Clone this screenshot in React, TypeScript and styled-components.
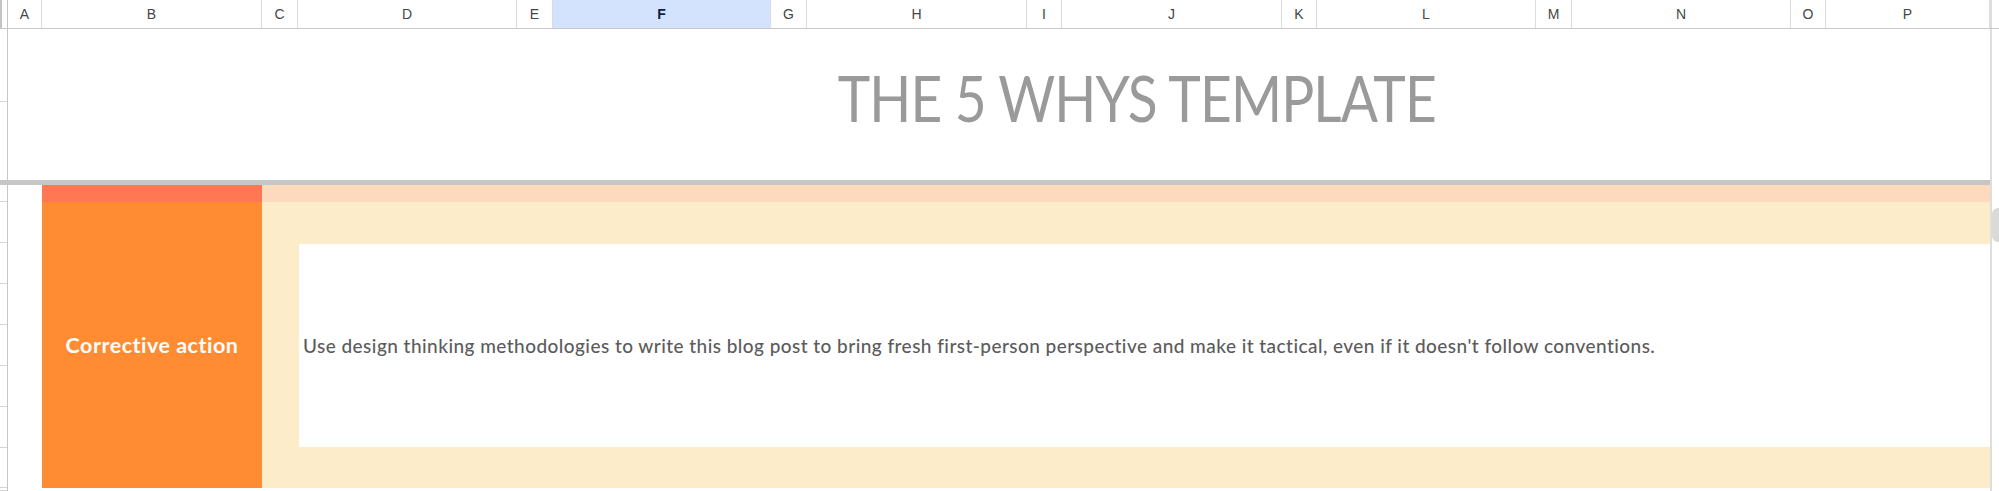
import React from 'react';
import styled, { createGlobalStyle } from 'styled-components';

const GlobalStyle = createGlobalStyle`
    html, body {
        margin:0;
        padding:0;
        background:#ffffff;
        overflow:hidden;
    }
`;

const Sheet = styled.div`
    width:1999px;
    height:491px;
    display:flex;
    flex-direction:column;
    background:#ffffff;
    font-family:"Liberation Sans", Arial, sans-serif;
`;

const HeaderRow = styled.div`
    display:flex;
    height:29px;
    flex:none;
    box-sizing:border-box;
    border-bottom:1px solid #c7c7c7;
`;

const Corner = styled.div`
    width:8px;
    flex:none;
    box-sizing:border-box;
    border-left:2px solid #c4c4c4;
    border-right:1px solid #c4c7c5;
`;

const ColHead = styled.div<{ $w: number; $active?: boolean }>`
    width:${p => p.$w}px;
    flex:none;
    box-sizing:border-box;
    display:flex;
    align-items:center;
    justify-content:center;
    border-right:1px solid #dadce0;
    font-size:14px;
    font-weight:${p => (p.$active ? 700 : 400)};
    color:${p => (p.$active ? '#0b1f4a' : '#444746')};
    background:${p => (p.$active ? '#d3e3fd' : '#ffffff')};
`;

const Gutter = styled.div`
    width:9px;
    flex:none;
    box-sizing:border-box;
    border-left:2px solid #dedede;
    background:#ffffff;
`;

const Body = styled.div`
    flex:1;
    display:flex;
    min-height:0;
`;

const RowHeads = styled.div`
    width:8px;
    flex:none;
    display:flex;
    flex-direction:column;
    box-sizing:border-box;
    border-right:1px solid #c4c7c5;
`;

const RowHead = styled.div<{ $h: number; $freeze?: boolean }>`
    height:${p => p.$h}px;
    flex:none;
    box-sizing:border-box;
    border-bottom:${p => (p.$freeze ? '5px solid #c6c6c6' : '1px solid #d5d5d5')};
`;

const Cells = styled.div`
    width:1982px;
    flex:none;
    display:flex;
    flex-direction:column;
`;

const TitleRow = styled.div`
    height:151px;
    flex:none;
    display:flex;
    align-items:center;
    justify-content:center;
    padding:0 14px 14px 290px;
    box-sizing:border-box;
`;

/* Futura is not installed: Lato, narrowed to the same run length */
const Title = styled.h1`
    margin:0;
    font-family:"Lato", "Liberation Sans", sans-serif;
    font-weight:400;
    font-size:64px;
    line-height:1;
    letter-spacing:-1px;
    color:#9a9a9a;
    white-space:nowrap;
    transform:scaleX(0.86);
`;

const Freeze = styled.div`
    height:5px;
    flex:none;
    background:#c6c6c6;
`;

const ActionRow = styled.div`
    height:303px;
    flex:none;
    display:flex;
`;

const BlankCell = styled.div`
    width:34px;
    flex:none;
    background:#ffffff;
`;

const LabelCol = styled.div`
    width:220px;
    flex:none;
    display:flex;
    flex-direction:column;
`;

const Band = styled.div<{ $color: string }>`
    height:17px;
    flex:none;
    background:${p => p.$color};
`;

const Label = styled.div`
    flex:1;
    display:flex;
    align-items:center;
    justify-content:center;
    background:#ff8b33;
    color:#ffffff;
    font-family:"Lato", "Liberation Sans", sans-serif;
    font-weight:700;
    font-size:21.5px;
    letter-spacing:0.5px;
`;

const ContentCol = styled.div`
    flex:1;
    display:flex;
    flex-direction:column;
`;

const Cream = styled.div`
    flex:1;
    display:flex;
    padding:42px 0 41px 37px;
    background:#fdecca;
`;

const TextBox = styled.div`
    flex:1;
    display:flex;
    align-items:center;
    padding-left:4px;
    background:#ffffff;
    font-family:"Lato", "Liberation Sans", sans-serif;
    font-weight:500;
    font-size:19px;
    letter-spacing:0.45px;
    color:#5c5c5c;
    white-space:nowrap;
`;

const ScrollTrack = styled.div`
    width:9px;
    flex:none;
    box-sizing:border-box;
    border-left:2px solid #dedede;
    padding-top:179px;
    background:#ffffff;
`;

const ScrollThumb = styled.div`
    height:34px;
    background:#dadada;
    border-radius:6px 0 0 6px;
`;

const columns: { name: string; w: number }[] = [
    { name: 'A', w: 34 }, { name: 'B', w: 220 }, { name: 'C', w: 36 }, { name: 'D', w: 219 },
    { name: 'E', w: 36 }, { name: 'F', w: 218 }, { name: 'G', w: 36 }, { name: 'H', w: 220 },
    { name: 'I', w: 35 }, { name: 'J', w: 220 }, { name: 'K', w: 35 }, { name: 'L', w: 219 },
    { name: 'M', w: 36 }, { name: 'N', w: 219 }, { name: 'O', w: 35 }, { name: 'P', w: 164 },
];

const rowHeights = [73, 78, 17, 41, 41, 41, 41, 41, 41, 40, 3];

const App = () => {
    return (
        <Sheet>
            <GlobalStyle />
            <HeaderRow>
                <Corner />
                {columns.map(c => (
                    <ColHead key={c.name} $w={c.w} $active={c.name === 'F'}>{c.name}</ColHead>
                ))}
                <Gutter />
            </HeaderRow>
            <Body>
                <RowHeads>
                    {rowHeights.map((h, i) => (
                        <RowHead key={i} $h={i === 1 ? h + 5 : h} $freeze={i === 1} />
                    ))}
                </RowHeads>
                <Cells>
                    <TitleRow>
                        <Title>THE 5 WHYS TEMPLATE</Title>
                    </TitleRow>
                    <Freeze />
                    <ActionRow>
                        <BlankCell />
                        <LabelCol>
                            <Band $color="#ff7753" />
                            <Label>Corrective action</Label>
                        </LabelCol>
                        <ContentCol>
                            <Band $color="#fdd9bd" />
                            <Cream>
                                <TextBox>
                                    Use design thinking methodologies to write this blog post to bring fresh first-person perspective and make it tactical, even if it doesn't follow conventions.
                                </TextBox>
                            </Cream>
                        </ContentCol>
                    </ActionRow>
                </Cells>
                <ScrollTrack>
                    <ScrollThumb />
                </ScrollTrack>
            </Body>
        </Sheet>
    );
};

export default App;
